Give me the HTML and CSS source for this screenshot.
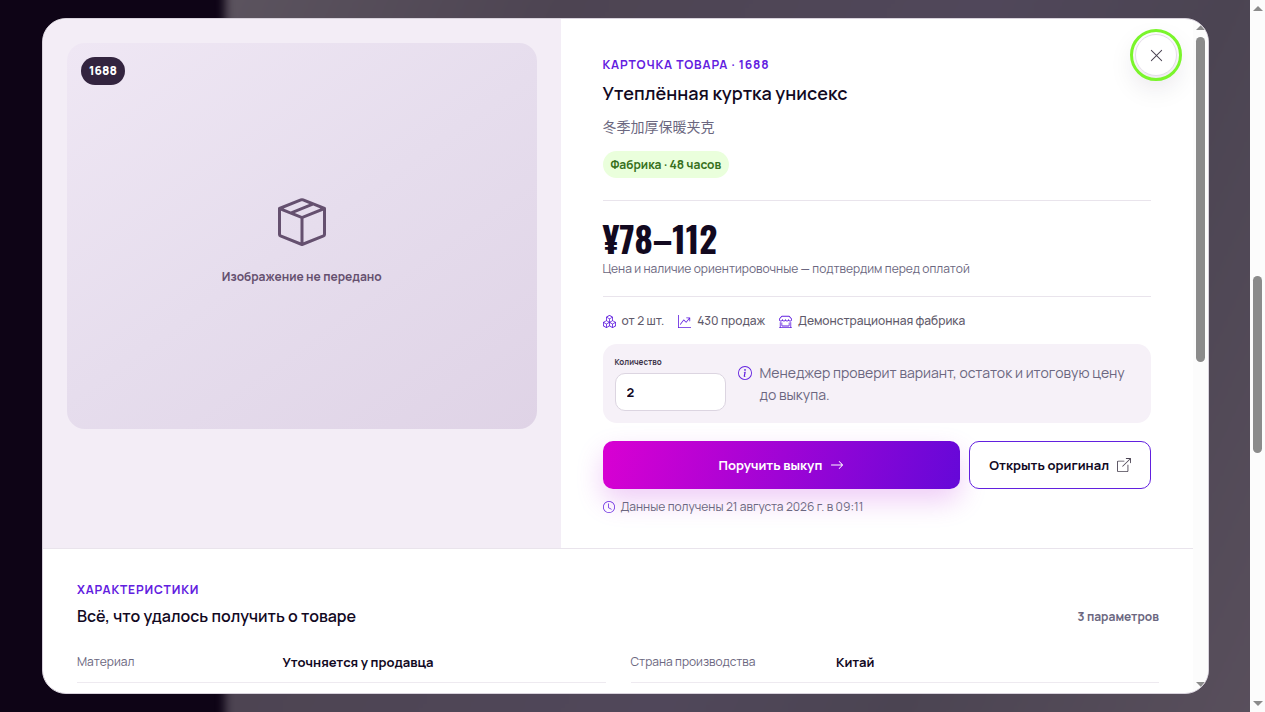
FILE: index.html
```html
<!DOCTYPE html>
<html lang="ru">
<head>
    <meta charset="UTF-8">
    <meta name="viewport" content="width=device-width, initial-scale=1.0">
    <title>Утеплённая куртка унисекс</title>
    <link rel="stylesheet" href="styles.css">
</head>
<body>
    <div class="page">
        <div class="backdrop"></div>

        <div class="modal" role="dialog" aria-modal="true" aria-labelledby="productTitle">
            <div class="modal-scroll">
                <section class="hero">
                    <div class="media">
                        <div class="media-frame">
                            <span class="source-badge">1688</span>
                            <svg class="media-icon" viewBox="0 0 16 16" fill="currentColor"><path d="M8.186 1.113a.5.5 0 0 0-.372 0L1.846 3.5l2.404.961L10.404 2zm3.564 1.426L5.596 5 8 5.961 14.154 3.5zm3.25 1.7-6.5 2.6v7.922l6.5-2.6V4.24zM7.5 14.762V6.838L1 4.239v7.923zM7.443.184a1.5 1.5 0 0 1 1.114 0l7.129 2.852A.5.5 0 0 1 16 3.5v8.662a1 1 0 0 1-.629.928l-7.185 2.874a.5.5 0 0 1-.372 0L.63 13.09a1 1 0 0 1-.63-.928V3.5a.5.5 0 0 1 .314-.464z"/></svg>
                            <span>Изображение не передано</span>
                        </div>
                    </div>

                    <div class="summary">
                        <p class="eyebrow">Карточка товара · 1688</p>
                        <h2 class="product-title" id="productTitle">Утеплённая куртка унисекс</h2>
                        <p class="original-title" lang="zh">冬季加厚保暖夹克</p>
                        <span class="tag">Фабрика · 48 часов</span>

                        <div class="price-block">
                            <strong class="price">¥78–112</strong>
                            <small class="price-note">Цена и наличие ориентировочные — подтвердим перед оплатой</small>
                        </div>

                        <ul class="meta">
                            <li>
                                <svg class="icon" viewBox="0 0 16 16" fill="currentColor"><path d="M7.752.066a.5.5 0 0 1 .496 0l3.75 2.143a.5.5 0 0 1 .252.434v3.995l3.498 2A.5.5 0 0 1 16 9.07v4.286a.5.5 0 0 1-.252.434l-3.75 2.143a.5.5 0 0 1-.496 0l-3.502-2-3.502 2.001a.5.5 0 0 1-.496 0l-3.75-2.143A.5.5 0 0 1 0 13.357V9.071a.5.5 0 0 1 .252-.434L3.75 6.638V2.643a.5.5 0 0 1 .252-.434zM4.25 7.504 1.508 9.071l2.742 1.567 2.742-1.567zM7.5 9.933l-2.75 1.571v3.134l2.75-1.571zm1 3.134 2.75 1.571v-3.134L8.5 9.933zm.508-3.996 2.742 1.567 2.742-1.567-2.742-1.567zm2.242-2.433V3.504L8.5 5.076V8.21zM7.5 8.21V5.076L4.75 3.504v3.134zM5.258 2.643 8 4.21l2.742-1.567L8 1.076zM15 9.933l-2.75 1.571v3.134L15 13.067zM3.75 14.638v-3.134L1 9.933v3.134z"/></svg>
                                от 2 шт.
                            </li>
                            <li>
                                <svg class="icon" viewBox="0 0 16 16" fill="currentColor"><path fill-rule="evenodd" d="M0 0h1v15h15v1H0zm10 3.5a.5.5 0 0 1 .5-.5h4a.5.5 0 0 1 .5.5v4a.5.5 0 0 1-1 0V4.9l-3.613 4.417a.5.5 0 0 1-.74.037L7.06 6.767l-3.656 5.027a.5.5 0 0 1-.808-.588l4-5.5a.5.5 0 0 1 .758-.06l2.609 2.61L13.445 4H10.5a.5.5 0 0 1-.5-.5"/></svg>
                                430 продаж
                            </li>
                            <li>
                                <svg class="icon" viewBox="0 0 16 16" fill="currentColor"><path d="M2.97 1.35A1 1 0 0 1 3.73 1h8.54a1 1 0 0 1 .76.35l2.609 3.044A1.5 1.5 0 0 1 16 5.37v.255a2.375 2.375 0 0 1-4.25 1.458A2.37 2.37 0 0 1 9.875 8 2.37 2.37 0 0 1 8 7.083 2.37 2.37 0 0 1 6.125 8a2.37 2.37 0 0 1-1.875-.917A2.375 2.375 0 0 1 0 5.625V5.37a1.5 1.5 0 0 1 .361-.976zm1.78 4.275a1.375 1.375 0 0 0 2.75 0 .5.5 0 0 1 1 0 1.375 1.375 0 0 0 2.75 0 .5.5 0 0 1 1 0 1.375 1.375 0 1 0 2.75 0V5.37a.5.5 0 0 0-.12-.325L12.27 2H3.73L1.12 5.045A.5.5 0 0 0 1 5.37v.255a1.375 1.375 0 0 0 2.75 0 .5.5 0 0 1 1 0M1.5 8.5A.5.5 0 0 1 2 9v6h12V9a.5.5 0 0 1 1 0v6h.5a.5.5 0 0 1 0 1H.5a.5.5 0 0 1 0-1H1V9a.5.5 0 0 1 .5-.5m2 .5a.5.5 0 0 1 .5.5V13h8V9.5a.5.5 0 0 1 1 0V13a1 1 0 0 1-1 1H4a1 1 0 0 1-1-1V9.5a.5.5 0 0 1 .5-.5"/></svg>
                                Демонстрационная фабрика
                            </li>
                        </ul>

                        <div class="order-box">
                            <div class="quantity">
                                <label for="quantity">Количество</label>
                                <input type="text" inputmode="numeric" id="quantity" name="quantity" value="2">
                            </div>
                            <p class="order-hint">
                                <svg class="icon" viewBox="0 0 16 16" fill="currentColor"><path d="M8 15A7 7 0 1 1 8 1a7 7 0 0 1 0 14m0 1A8 8 0 1 0 8 0a8 8 0 0 0 0 16"/><path d="m8.93 6.588-2.29.287-.082.38.45.083c.294.07.352.176.288.469l-.738 3.468c-.194.897.105 1.319.808 1.319.545 0 1.178-.252 1.465-.598l.088-.416c-.2.176-.492.246-.686.246-.275 0-.375-.193-.304-.533zM9 4.5a1 1 0 1 1-2 0 1 1 0 0 1 2 0"/></svg>
                                <span>Менеджер проверит вариант, остаток и итоговую цену до выкупа.</span>
                            </p>
                        </div>

                        <div class="actions">
                            <button type="button" class="btn btn-primary">
                                Поручить выкуп
                                <svg class="icon" viewBox="0 0 16 16" fill="currentColor"><path fill-rule="evenodd" d="M1 8a.5.5 0 0 1 .5-.5h11.793l-3.147-3.146a.5.5 0 0 1 .708-.708l4 4a.5.5 0 0 1 0 .708l-4 4a.5.5 0 0 1-.708-.708L13.293 8.5H1.5A.5.5 0 0 1 1 8"/></svg>
                            </button>
                            <a href="#" class="btn btn-outline">
                                Открыть оригинал
                                <svg class="icon" viewBox="0 0 16 16" fill="currentColor"><path fill-rule="evenodd" d="M8.636 3.5a.5.5 0 0 0-.5-.5H1.5A1.5 1.5 0 0 0 0 4.5v10A1.5 1.5 0 0 0 1.5 16h10a1.5 1.5 0 0 0 1.5-1.5V7.864a.5.5 0 0 0-1 0V14.5a.5.5 0 0 1-.5.5h-10a.5.5 0 0 1-.5-.5v-10a.5.5 0 0 1 .5-.5h6.636a.5.5 0 0 0 .5-.5"/><path fill-rule="evenodd" d="M16 .5a.5.5 0 0 0-.5-.5h-5a.5.5 0 0 0 0 1h3.793L6.146 9.146a.5.5 0 1 0 .708.708L15 1.707V5.5a.5.5 0 0 0 1 0z"/></svg>
                            </a>
                        </div>

                        <p class="updated">
                            <svg class="icon" viewBox="0 0 16 16" fill="currentColor"><path d="M8 3.5a.5.5 0 0 0-1 0V9a.5.5 0 0 0 .252.434l3.5 2a.5.5 0 0 0 .496-.868L8 8.71z"/><path d="M8 16A8 8 0 1 0 8 0a8 8 0 0 0 0 16m7-8A7 7 0 1 1 1 8a7 7 0 0 1 14 0"/></svg>
                            Данные получены 21 августа 2026 г. в 09:11
                        </p>
                    </div>
                </section>

                <section class="specs">
                    <header class="specs-head">
                        <div>
                            <p class="eyebrow">Характеристики</p>
                            <h3 class="specs-title">Всё, что удалось получить о товаре</h3>
                        </div>
                        <span class="specs-count">3 параметров</span>
                    </header>
                    <dl class="specs-list">
                        <div class="spec">
                            <dt>Материал</dt>
                            <dd>Уточняется у продавца</dd>
                        </div>
                        <div class="spec">
                            <dt>Страна производства</dt>
                            <dd>Китай</dd>
                        </div>
                    </dl>
                </section>
            </div>

            <div class="scrollbar" aria-hidden="true">
                <span class="arrow arrow-up"></span>
                <span class="track"><span class="thumb thumb-modal"></span></span>
                <span class="arrow arrow-down"></span>
            </div>

            <button type="button" class="close" aria-label="Закрыть">
                <svg viewBox="0 0 16 16" fill="currentColor"><path d="M2.146 2.854a.5.5 0 1 1 .708-.708L8 7.293l5.146-5.147a.5.5 0 0 1 .708.708L8.707 8l5.147 5.146a.5.5 0 0 1-.708.708L8 8.707l-5.146 5.147a.5.5 0 0 1-.708-.708L7.293 8z"/></svg>
            </button>
        </div>
    </div>

    <div class="scrollbar" aria-hidden="true">
        <span class="arrow arrow-up"></span>
        <span class="track track-page"><span class="thumb thumb-page"></span></span>
        <span class="arrow arrow-down"></span>
    </div>
</body>
</html>
```
FILE: styles.css
```css
* { box-sizing: border-box; }
body { display: flex; height: 100vh; margin: 0; overflow: hidden; font-family: Manrope, Inter, "Noto Sans CJK SC", sans-serif; font-size: 14px; color: #12091f; }
p, h2, h3, ul, dl, dd { margin: 0; padding: 0; }
svg { display: block; flex: none; }

.page { position: relative; flex: 1; min-width: 0; padding: 18px 41px 18px 42px; overflow: hidden; background: #0e0416; }
.backdrop { position: absolute; top: -30px; right: -30px; bottom: -30px; left: 225px; background: linear-gradient(115deg, #5c545f 0%, #4d4452 25%, #50475a 55%, #4b4452 72%, #5a505d 100%); filter: blur(5px); }

.modal { position: relative; display: flex; height: 100%; overflow: hidden; background: #fff; border: 1px solid #d8d2dc; border-radius: 24px; }
.modal-scroll { flex: 1; min-width: 0; overflow: hidden; }

.hero { display: grid; grid-template-columns: 9fr 11fr; border-bottom: 1px solid #e9e4ec; }
.media { padding: 24px; background: #f3edf6; }
.media-frame { position: relative; display: flex; flex-direction: column; align-items: center; justify-content: center; gap: 22px; aspect-ratio: 470 / 386; padding-top: 12px; border-radius: 18px; background: linear-gradient(145deg, #efe7f4, #e6dded 50%, #dfd3e6); color: #65506f; font-size: 12px; line-height: 18px; font-weight: 700; }
.media-icon { width: 48px; height: 48px; }
.source-badge { position: absolute; top: 14px; left: 14px; padding: 5px 8px; border-radius: 14px; background: #33243f; color: #fff; font-weight: 800; }

.summary { display: flex; flex-direction: column; padding: 38px 42px 31px; }
.eyebrow { color: #6220df; font-size: 12px; line-height: 16px; font-weight: 700; letter-spacing: .07em; text-transform: uppercase; }
.product-title { margin-top: 8px; font-size: 18px; line-height: 24px; font-weight: 600; }
.original-title { margin-top: 12px; color: #6b6780; line-height: 20px; }
.tag { align-self: flex-start; margin-top: 14px; padding: 5px 8px; border-radius: 14px; background: #eaffdc; color: #37701c; font-size: 12px; line-height: 17px; font-weight: 700; }

.price-block { display: flex; flex-direction: column; margin-top: 22px; padding: 15px 0 18px; border-top: 1px solid #e9e4ec; border-bottom: 1px solid #e9e4ec; }
.price { font-family: Oswald, "Roboto Condensed", "Liberation Sans Narrow", sans-serif; font-size: 35px; line-height: 44px; }
.price-note { color: #6b6780; font-size: 12px; line-height: 18px; }

.meta { display: flex; flex-wrap: wrap; gap: 8px 14px; margin-top: 14px; list-style: none; color: #5f5a6b; font-size: 12px; line-height: 20px; font-weight: 500; }
.meta li, .updated { display: flex; align-items: center; gap: 6px; }
.icon { width: 12px; height: 12px; color: #6220df; }
.meta .icon { width: 13px; height: 13px; }

.order-box { display: flex; align-items: center; gap: 12px; margin-top: 13px; padding: 12px; border-radius: 14px; background: #f6f1f8; }
.quantity { display: flex; flex-direction: column; gap: 5px; width: 111px; }
.quantity label { color: #40364c; font-size: 8px; line-height: 12px; font-weight: 700; }
.quantity input { width: 100%; height: 38px; padding: 0 11px; border: 1px solid #dcd5e1; border-radius: 10px; background: #fff; color: inherit; font: 700 13px Manrope, Inter, sans-serif; }
.order-hint { display: flex; flex: 1; gap: 8px; color: #6b6780; line-height: 22px; }
.order-hint .icon { width: 14px; height: 14px; margin-top: 4px; }

.actions { display: flex; gap: 9px; margin-top: 18px; }
.btn { display: flex; align-items: center; justify-content: center; gap: 8px; height: 48px; padding: 0 19px; border-radius: 10px; font: 700 13px Manrope, Inter, sans-serif; text-decoration: none; white-space: nowrap; cursor: pointer; }
.btn .icon { width: 14px; height: 14px; color: inherit; }
.btn-primary { flex: 1; border: 0; background: linear-gradient(105deg, #d900d2, #6508d8); color: #fff; box-shadow: 0 12px 28px rgba(177, 0, 216, .2); }
.btn-outline { border: 1px solid #6220df; background: #fff; color: #12091f; }
.btn-outline .icon { color: #4a4352; }
.updated { margin-top: 8px; color: #6b6780; font-size: 12px; line-height: 20px; }

.specs { padding: 33px 34px; }
.specs-head { display: flex; align-items: flex-end; justify-content: space-between; }
.specs-title { margin-top: 6px; font-size: 16px; line-height: 24px; font-weight: 600; }
.specs-count { color: #6b6780; font-size: 12px; line-height: 22px; font-weight: 700; }
.specs-list { display: grid; grid-template-columns: 1fr 1fr; column-gap: 25px; margin-top: 12px; }
.spec { display: grid; grid-template-columns: 7fr 11fr; padding: 12px 0 10px; border-bottom: 1px solid #eeeaf0; line-height: 20px; }
.spec dt { color: #6b6780; font-size: 12px; }
.spec dd { font-size: 13px; font-weight: 700; }

.close { position: absolute; top: 15px; right: 31px; display: grid; place-items: center; width: 42px; height: 42px; padding: 0; border: 1px solid #e4dce8; border-radius: 50%; background: #fff; color: #4a4352; outline: 3px solid #7af52b; outline-offset: 2px; cursor: pointer; box-shadow: 0 10px 28px rgba(30, 10, 50, .12); }
.close svg { width: 15px; height: 15px; }

.scrollbar { display: flex; flex: none; flex-direction: column; align-items: center; justify-content: space-between; width: 15px; padding: 6px 0; background: #fcfcfc; }
.arrow { width: 0; height: 0; border: 5px solid transparent; }
.arrow-up { border-top: 0; border-bottom-color: #8b8b8b; }
.arrow-down { border-bottom: 0; border-top-color: #8b8b8b; }
.track { flex: 1; width: 9px; margin: 7px 0; }
.thumb { display: block; border-radius: 5px; background: #8b8b8b; }
.thumb-modal { height: 51%; }
.track-page { display: grid; grid-template-rows: 258fr 177fr 241fr; }
.thumb-page { grid-row: 2; }
```
